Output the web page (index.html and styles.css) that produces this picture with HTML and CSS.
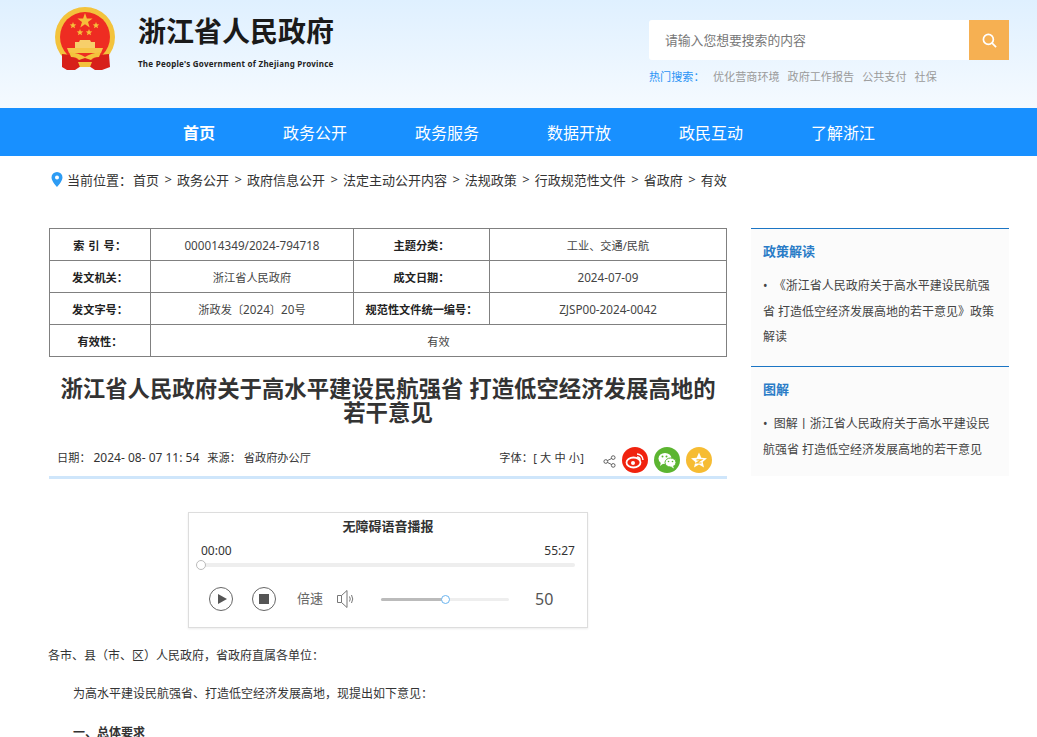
FILE: index.html
```html
<!DOCTYPE html>
<html lang="zh-CN">
<head>
<meta charset="utf-8">
<title>浙江省人民政府</title>
<link rel="stylesheet" href="styles.css">
</head>
<body>
<header class="top">
  <div class="wrap top-in">
    <div class="brand">
      <svg class="emblem" viewBox="0 0 60 64" width="60" height="64" aria-hidden="true">
        <circle cx="30" cy="30" r="30" fill="#f3c33c"/>
        <circle cx="30" cy="30" r="25" fill="#ee2c22"/>
        <path d="M30 6 L31.900 11.400 L37.600 11.500 L33 15 L34.700 20.500 L30 17.200 L25.300 20.500 L27 15 L22.400 11.500 L28.100 11.400 Z" fill="#f6bf3a"/>
        <path d="M18 15 L18.900 17.300 L21.300 17.400 L19.400 18.900 L20.100 21.200 L18 19.900 L15.900 21.200 L16.600 18.900 L14.700 17.400 L17.100 17.300 Z" fill="#f6bf3a"/>
        <path d="M41 15 L41.900 17.300 L44.300 17.400 L42.400 18.900 L43.100 21.200 L41 19.900 L38.900 21.200 L39.600 18.900 L37.700 17.400 L40.100 17.300 Z" fill="#f6bf3a"/>
        <path d="M25 22 L25.900 24.300 L28.300 24.400 L26.400 25.900 L27.100 28.200 L25 26.900 L22.900 28.200 L23.600 25.900 L21.700 24.400 L24.100 24.300 Z" fill="#f6bf3a"/>
        <path d="M34 22 L34.900 24.300 L37.300 24.400 L35.400 25.900 L36.100 28.200 L34 26.900 L31.900 28.200 L32.600 25.900 L30.700 24.400 L33.100 24.300 Z" fill="#f6bf3a"/>
        <path d="M25 33 H35 L36 35 H40 V41 H20 V35 H24 Z" fill="#f7cf6a"/>
        <path d="M12 41 H48 L46 46 H14 Z" fill="#f6c548"/>
        <path d="M7 47 Q17 47 23 53 L30 50 L37 53 Q43 47 54 47 L55 60 L47 63 H40 L34 59 H26 L20 63 H12 L7 60 Z" fill="#d7201a"/>
        <path d="M14 45 Q24 46 30 50 Q36 46 46 45 L44 50 Q38 50 36 53 L30 51 L24 53 Q22 50 16 50 Z M23 55 H37 L35 60 H25 Z" fill="#f3c33c"/>
      </svg>
      <div class="brand-text">
        <div class="brand-cn">浙江省人民政府</div>
        <div class="brand-en">The People's Government of Zhejiang Province</div>
      </div>
    </div>
    <div class="search-area">
      <div class="search">
        <span class="search-input">请输入您想要搜索的内容</span>
        <button class="search-btn" type="button" aria-label="搜索">
          <svg viewBox="0 0 16 16" width="15" height="15" fill="none" stroke="#fff" stroke-width="1.800"><circle cx="6.800" cy="6.800" r="5.300"/><path d="M10.800 10.800 L15 15"/></svg>
        </button>
      </div>
      <div class="hot">
        <span class="hot-label">热门搜索：</span>
        <span class="hot-links"><a>优化营商环境</a><a>政府工作报告</a><a>公共支付</a><a>社保</a></span>
      </div>
    </div>
  </div>
</header>
<nav class="nav">
  <a class="active">首页</a><a>政务公开</a><a>政务服务</a><a>数据开放</a><a>政民互动</a><a>了解浙江</a>
</nav>
<div class="wrap crumbs">
  <svg class="pin" viewBox="0 0 12 15" width="12" height="15" aria-hidden="true"><path fill-rule="evenodd" d="M6 0a5.500 5.500 0 0 1 5.500 5.500C11.500 9.300 6 15 6 15S.5 9.300.5 5.500A5.500 5.500 0 0 1 6 0Zm0 3.500a2 2 0 1 0 0 4 2 2 0 0 0 0-4Z" fill="#2d9cf4"/></svg>
  <span>当前位置：</span><a>首页</a><i>&gt;</i><a>政务公开</a><i>&gt;</i><a>政府信息公开</a><i>&gt;</i><a>法定主动公开内容</a><i>&gt;</i><a>法规政策</a><i>&gt;</i><a>行政规范性文件</a><i>&gt;</i><a>省政府</a><i>&gt;</i><a>有效</a>
</div>
<div class="wrap columns">
  <main class="main">
    <table class="meta">
      <colgroup><col class="c1"><col class="c2"><col class="c3"><col class="c4"></colgroup>
      <tr><th class="spaced">索 引 号：</th><td><span class="num">000014349/2024-794718</span></td><th>主题分类：</th><td>工业、交通/民航</td></tr>
      <tr><th>发文机关：</th><td>浙江省人民政府</td><th>成文日期：</th><td><span class="num">2024-07-09</span></td></tr>
      <tr><th>发文字号：</th><td>浙政发〔<span class="num">2024</span>〕<span class="num">20</span>号</td><th>规范性文件统一编号：</th><td><span class="num">ZJSP00-2024-0042</span></td></tr>
      <tr><th>有效性：</th><td colspan="3">有效</td></tr>
    </table>
    <h1 class="title">浙江省人民政府关于高水平建设民航强省 打造低空经济发展高地的若干意见</h1>
    <div class="info">
      <div class="info-left"><span>日期： <span class="date">2024- 08- 07 11: 54</span></span><span>来源： 省政府办公厅</span></div>
      <div class="info-right">
        <span class="font-size">字体：[ 大 中 小]</span>
        <svg class="share" viewBox="0 0 14 14" width="13" height="13" fill="none" stroke="#555" stroke-width="1"><circle cx="3" cy="7" r="2"/><circle cx="11" cy="2.800" r="2"/><circle cx="11" cy="11.200" r="2"/><path d="M4.800 6 L9.200 3.800 M4.800 8 L9.200 10.200"/></svg>
        <span class="soc weibo"><svg viewBox="0 0 26 26" width="26" height="26"><ellipse cx="11.500" cy="15.500" rx="7" ry="5" fill="none" stroke="#fff" stroke-width="1.800"/><circle cx="11" cy="16" r="2" fill="#fff"/><path d="M15 7a6 6 0 0 1 6 6M15 10a3 3 0 0 1 3 3" fill="none" stroke="#fff" stroke-width="1.500"/></svg></span>
        <span class="soc wechat"><svg viewBox="0 0 26 26" width="26" height="26"><ellipse cx="11" cy="11.500" rx="6.500" ry="5.500" fill="#fff"/><path d="M7 15 L6 19 L10 16Z" fill="#fff"/><ellipse cx="16.500" cy="15.500" rx="5.500" ry="4.500" fill="#fff" stroke="#5cb531" stroke-width="1"/><path d="M19 19 L20 21.500 L16.500 19.500Z" fill="#fff"/><circle cx="8.500" cy="9.500" r="1" fill="#5cb531"/><circle cx="12.500" cy="9.500" r="1" fill="#5cb531"/><circle cx="14.500" cy="14.500" r=".8" fill="#5cb531"/><circle cx="18.500" cy="14.500" r=".8" fill="#5cb531"/></svg></span>
        <span class="soc star"><svg viewBox="0 0 26 26" width="26" height="26"><path d="M13 5.500 L15.300 10.700 L21 11.200 L16.700 15 L18 20.500 L13 17.600 L8 20.500 L9.300 15 L5 11.200 L10.700 10.700 Z" fill="#fff"/><path d="M10.500 12.800 H15.500 L10.500 16 H15.500" fill="none" stroke="#f6bc33" stroke-width="1.200"/></svg></span>
      </div>
    </div>
    <section class="player">
      <div class="player-title">无障碍语音播报</div>
      <div class="times"><span>00:00</span><span>55:27</span></div>
      <div class="progress"><span class="knob"></span></div>
      <div class="controls">
        <span class="round"><span class="tri"></span></span>
        <span class="round"><span class="sq"></span></span>
        <span class="speed">倍速</span>
        <svg class="vol" viewBox="0 0 20 20" width="20" height="20" fill="none" stroke="#777" stroke-width="1"><path d="M1.500 6.500 H5.500 L11 1.500 V18.500 L5.500 13.500 H1.500 Z M5.500 6.500 V13.500"/><path d="M13.500 7.500 Q15 10 13.500 12.500 M15.500 6 Q18 10 15.500 14"/></svg>
        <div class="volume"><span class="vol-fill"></span><span class="vol-knob"></span></div>
        <span class="vol-num">50</span>
      </div>
    </section>
    <article class="body">
      <p class="first">各市、县（市、区）人民政府，省政府直属各单位：</p>
      <p>为高水平建设民航强省、打造低空经济发展高地，现提出如下意见：</p>
      <p class="bold">一、总体要求</p>
    </article>
  </main>
  <aside class="side">
    <section class="box">
      <h2>政策解读</h2>
      <p>•&nbsp;&nbsp;《浙江省人民政府关于高水平建设民航强省 打造低空经济发展高地的若干意见》政策解读</p>
    </section>
    <section class="box">
      <h2>图解</h2>
      <p>•&nbsp;&nbsp;图解丨浙江省人民政府关于高水平建设民航强省 打造低空经济发展高地的若干意见</p>
    </section>
  </aside>
</div>
</body>
</html>
```
FILE: styles.css
```css
* { box-sizing: border-box; }
html, body { margin: 0; padding: 0; height: 737px; overflow: hidden; }
body {
  font-family: "Noto Sans", "Noto Sans CJK SC", sans-serif;
  color: #333;
  background: #fff;
  font-size: 12px;
}
a { color: inherit; text-decoration: none; }
.wrap { width: 960px; margin-left: 49px; }

.top { height: 108px; background: linear-gradient(#dff0ff, #f5faff); }
.top-in { display: flex; justify-content: space-between; }
.brand { display: flex; padding-top: 7px; margin-left: 6px; }
.emblem { display: block; }
.brand-text { margin-left: 23px; padding-top: 4px; }
.brand-cn {
  font-family: "Noto Sans CJK SC", sans-serif;
  font-weight: 700; font-size: 28px; line-height: 38px; color: #1a1a1a;
}
.brand-en {
  font-family: "Noto Sans", sans-serif;
  font-weight: 700; font-size: 8px; line-height: 12px; margin-top: 9px; color: #222; white-space: nowrap; letter-spacing: .25px;
}
.search-area { width: 360px; padding-top: 20px; }
.search { display: flex; height: 40px; background: #fff; border-radius: 3px 0 0 3px; }
.search-input { flex: 1; padding-left: 16px; line-height: 40px; font-size: 12.800px; color: #777; }
.search-btn { width: 40px; height: 40px; border: 0; padding: 0; background: #f6b052; display: flex; align-items: center; justify-content: center; }
.hot { display: flex; margin-top: 8px; line-height: 18px; font-size: 11.100px; }
.hot-label { color: #2a93f5; width: 64px; }
.hot-links { display: flex; gap: 8px; color: #9a9a9a; }

.nav { height: 48px; background: #1890ff; display: flex; justify-content: center; gap: 68px; padding-left: 21px; }
.nav a { line-height: 50px; font-size: 16px; color: #fff; }
.nav a.active { font-weight: 700; }

.crumbs { display: flex; align-items: center; height: 48px; padding-bottom: 2px; font-size: 13px; color: #333; padding-left: 2px; }
.pin { margin-right: 4px; }
.crumbs i { font-style: normal; margin: 0 5px 0 5.500px; }
.crumbs span { margin-right: 1px; }

.columns { display: flex; justify-content: space-between; margin-top: 24px; }
.main { width: 678px; }
.meta { width: 677px; border-collapse: collapse; table-layout: fixed; font-size: 11.200px; }
.c1 { width: 101px; } .c2 { width: 203px; } .c3 { width: 136px; } .c4 { width: 237px; }
.meta th, .meta td { height: 32px; border: 1px solid #808080; padding: 0; text-align: center; font-weight: 400; color: #444; white-space: nowrap; }
.meta th { font-weight: 700; color: #222; }
.meta .spaced { letter-spacing: .5px; }
.num { font-size: 11.700px; }
.title { margin: 20px 0 0; padding: 0 8px; font-size: 22.400px; line-height: 24px; font-weight: 700; text-align: center; color: #333; }
.info { display: flex; justify-content: space-between; align-items: center; height: 43px; margin-top: 11px; padding: 8px 15px 0 8px; border-bottom: 3px solid #cfe6fb; font-size: 11.200px; color: #333; }
.info-left { display: flex; gap: 8px; padding-bottom: 6px; }
.date { font-size: 12px; }
.info-right { display: flex; align-items: center; gap: 6px; }
.font-size { margin-right: 13px; padding-bottom: 6px; letter-spacing: .15px; }
.share { margin-top: 3px; }
.soc { width: 26px; height: 26px; border-radius: 50%; display: block; }
.soc svg { display: block; }
.weibo { background: #f0230f; }
.wechat { background: #5cb531; }
.star { background: #f6bc33; }

.player { width: 400px; height: 116px; margin: 33px 0 0 139px; border: 1px solid #ddd; padding: 4px 12px 0; box-shadow: 0 1px 2px rgba(0,0,0,.08); }
.player-title { text-align: center; font-weight: 700; font-size: 13px; line-height: 18px; color: #333; }
.times { display: flex; justify-content: space-between; margin-top: 7px; font-size: 12px; line-height: 18px; color: #333; }
.progress { position: relative; height: 4px; margin-top: 3px; background: #eee; border-radius: 2px; }
.knob { position: absolute; left: -5px; top: -3px; width: 10px; height: 10px; border: 1px solid #bbb; border-radius: 50%; background: #fff; }
.controls { display: flex; align-items: center; margin-top: 20px; padding-left: 8px; }
.round { width: 24px; height: 24px; border: 1px solid #666; border-radius: 50%; display: flex; align-items: center; justify-content: center; margin-right: 19px; }
.tri { width: 0; height: 0; border-left: 9px solid #555; border-top: 5.500px solid transparent; border-bottom: 5.500px solid transparent; margin-left: 2px; }
.sq { width: 10px; height: 10px; background: #555; }
.speed { font-size: 13px; color: #666; margin-left: 2px; padding-bottom: 4px; }
.vol { margin-left: 13px; }
.volume { position: relative; width: 128px; height: 3px; margin-left: 25px; background: #eee; border-radius: 2px; }
.vol-fill { display: block; width: 64px; height: 3px; background: #bbb; border-radius: 2px; }
.vol-knob { position: absolute; left: 59.500px; top: -3px; width: 9px; height: 9px; border: 1px solid #69b4f0; border-radius: 50%; background: #fff; }
.vol-num { margin-left: 26px; font-size: 16px; color: #555; }

.body { margin-top: 17.600px; font-size: 12px; line-height: 20px; color: #333; }
.body p { margin: 0 0 18.500px; text-indent: 24px; white-space: nowrap; }
.body p.first { text-indent: 0; margin-left: -1px; }
.body p.bold { font-weight: 700; }

.side { width: 258px; }
.box { background: #fbfbfb; border-top: 1px solid #1b75c4; padding: 0 12px; height: 138px; }
.box + .box { height: 110px; }
.box h2 { margin: 0; padding-top: 13px; font-size: 13px; line-height: 18px; font-weight: 700; color: #2a7cc7; }
.box p { margin: 13px 0 0; font-size: 12px; line-height: 25.500px; color: #444; }
```
